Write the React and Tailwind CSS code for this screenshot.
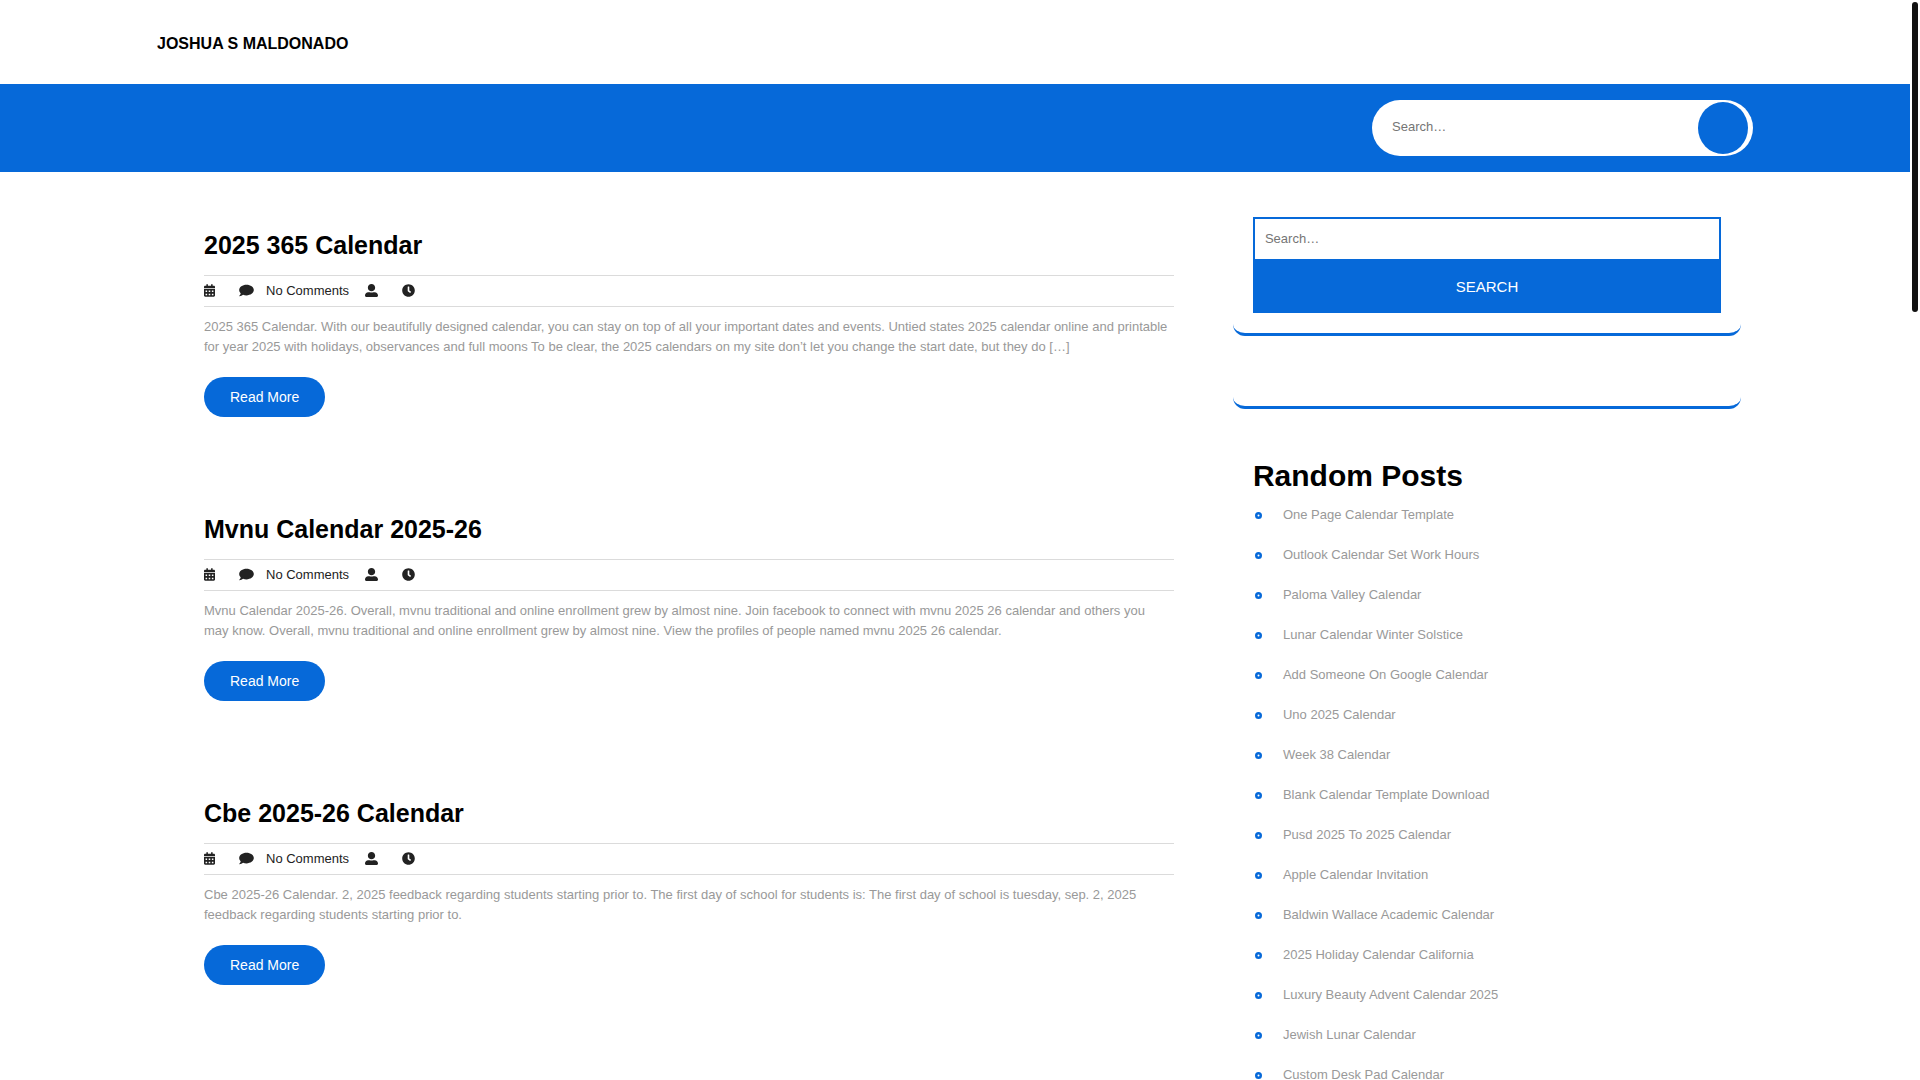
import { FaCalendarAlt, FaClock, FaUserAlt } from "react-icons/fa";

const posts = [
  {
    title: "2025 365 Calendar",
    excerpt:
      "2025 365 Calendar. With our beautifully designed calendar, you can stay on top of all your important dates and events. Untied states 2025 calendar online and printable for year 2025 with holidays, observances and full moons To be clear, the 2025 calendars on my site don’t let you change the start date, but they do […]",
  },
  {
    title: "Mvnu Calendar 2025-26",
    excerpt:
      "Mvnu Calendar 2025-26. Overall, mvnu traditional and online enrollment grew by almost nine. Join facebook to connect with mvnu 2025 26 calendar and others you may know. Overall, mvnu traditional and online enrollment grew by almost nine. View the profiles of people named mvnu 2025 26 calendar.",
  },
  {
    title: "Cbe 2025-26 Calendar",
    excerpt:
      "Cbe 2025-26 Calendar. 2, 2025 feedback regarding students starting prior to. The first day of school for students is: The first day of school is tuesday, sep. 2, 2025 feedback regarding students starting prior to.",
  },
];

const randomPosts = [
  "One Page Calendar Template",
  "Outlook Calendar Set Work Hours",
  "Paloma Valley Calendar",
  "Lunar Calendar Winter Solstice",
  "Add Someone On Google Calendar",
  "Uno 2025 Calendar",
  "Week 38 Calendar",
  "Blank Calendar Template Download",
  "Pusd 2025 To 2025 Calendar",
  "Apple Calendar Invitation",
  "Baldwin Wallace Academic Calendar",
  "2025 Holiday Calendar California",
  "Luxury Beauty Advent Calendar 2025",
  "Jewish Lunar Calendar",
  "Custom Desk Pad Calendar",
];

function CommentIcon() {
  return (
    <svg viewBox="0 0 576 512" className="mb-[2px] h-[13px] w-[15px]" fill="currentColor" aria-hidden="true">
      <path d="M576 240c0 115-129 208-288 208-48.3 0-93.9-8.6-133.9-23.8-40.3 31.2-89.8 50.3-142.4 55.7-5.2.6-10.2-2.8-11.5-7.7-1.3-5 2.7-8.1 6.6-11.8 19.3-18.4 42.7-32.8 51.9-94.6C21.9 330.9 0 287.3 0 240 0 125.1 129 32 288 32s288 93.1 288 208z" />
    </svg>
  );
}

function RingIcon() {
  return (
    <svg viewBox="0 0 14 14" className="h-[7px] w-[7px]" fill="none" aria-hidden="true">
      <circle cx="7" cy="7" r="4.5" stroke="#0669d9" strokeWidth="5" />
    </svg>
  );
}

function Post({ post }) {
  return (
    <article className="mb-[97px]">
      <h2 className="text-[25px] leading-[30px] font-bold text-black">
        <a href="#">{post.title}</a>
      </h2>
      <div className="mt-[15px] flex h-8 items-center border-y border-[#dbdbdb] text-[#222]">
        <FaCalendarAlt className="mb-[2px] h-[13px] w-[11px]" />
        <div className="ml-6 flex items-center gap-3">
          <CommentIcon />
          <a href="#">No Comments</a>
        </div>
        <FaUserAlt className="mb-[2px] ml-4 h-[13px] w-[13px]" />
        <FaClock className="mb-[2px] ml-6 h-[13px] w-[13px]" />
      </div>
      <p className="mt-[10px] pr-1 leading-5 text-[#999]">{post.excerpt}</p>
      <a
        href="#"
        className="mt-5 inline-flex h-10 items-center rounded-full bg-[#0669d9] px-[26px] text-sm text-white"
      >
        Read More
      </a>
    </article>
  );
}

export default function App() {
  return (
    <div className="h-screen overflow-hidden bg-white pr-[10px] font-['Liberation_Sans',Arial,sans-serif] text-[13px]">
      <header>
        <div className="flex h-[84px] items-center px-[157px] pt-[3px]">
          <a href="#" className="text-base leading-6 font-bold text-black uppercase">
            Joshua S Maldonado
          </a>
        </div>
        <div className="flex justify-end bg-[#0669d9] px-[157px] py-4">
          <form className="flex h-14 w-[381px] items-center rounded-full bg-white pr-[5px] pl-5">
            <input
              type="search"
              aria-label="Search"
              placeholder="Search…"
              className="min-w-0 flex-1 pb-[2px] outline-none placeholder:text-[#757575]"
            />
            <button
              type="submit"
              aria-label="Search"
              className="h-[52px] w-[50px] rounded-[50%] bg-[#0669d9]"
            />
          </form>
        </div>
      </header>

      <main className="grid grid-cols-[21fr_11fr] gap-[59px] pr-[169px] pl-[204px]">
        <section className="pt-[58px]">
          {posts.map((post) => (
            <Post key={post.title} post={post} />
          ))}
        </section>

        <aside>
          <div className="rounded-xl border-b-3 border-[#0669d9] px-5 pt-[45px] pb-5">
            <form>
              <input
                type="search"
                aria-label="Search posts"
                placeholder="Search…"
                className="block h-11 w-full border-2 border-[#0669d9] px-[10px] pb-[2px] outline-none placeholder:text-[#757575]"
              />
              <button
                type="submit"
                className="block h-[52px] w-full bg-[#0669d9] text-[15px] text-white uppercase"
              >
                Search
              </button>
            </form>
          </div>
          <div className="mt-[30px] h-[43px] rounded-xl border-b-3 border-[#0669d9]" />

          <div className="px-5 pt-[49px]">
            <h2 className="text-3xl leading-9 font-bold text-black">Random Posts</h2>
            <ul className="mt-[11px]">
              {randomPosts.map((title) => (
                <li key={title} className="mb-5 flex h-5 items-center gap-[21px] pl-[2px]">
                  <RingIcon />
                  <a href="#" className="leading-5 text-[#999]">
                    {title}
                  </a>
                </li>
              ))}
            </ul>
          </div>
        </aside>
      </main>

      {/* page scroll thumb */}
      <div className="fixed top-[2px] right-[2px] h-[310px] w-[6px] rounded-full bg-[#111]" />
    </div>
  );
}
